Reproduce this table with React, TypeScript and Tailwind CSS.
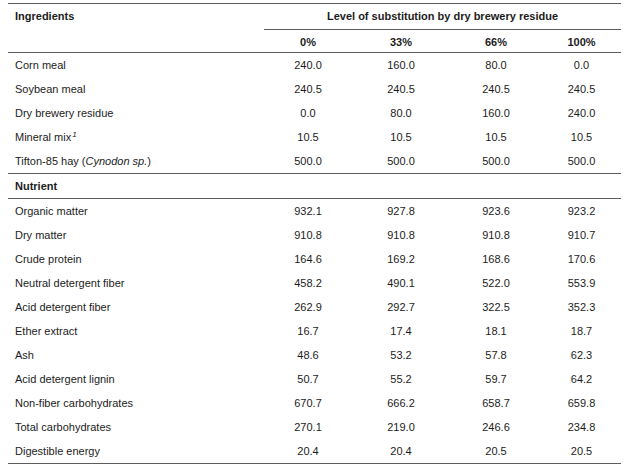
import React from "react";

const ingredients: [React.ReactNode, string[]][] = [
  ["Corn meal", ["240.0", "160.0", "80.0", "0.0"]],
  ["Soybean meal", ["240.5", "240.5", "240.5", "240.5"]],
  ["Dry brewery residue", ["0.0", "80.0", "160.0", "240.0"]],
  [
    <>
      Mineral mix<sup className="italic text-[8px] ml-[1px]">1</sup>
    </>,
    ["10.5", "10.5", "10.5", "10.5"],
  ],
  [
    <>
      Tifton-85 hay (<i>Cynodon sp.</i>)
    </>,
    ["500.0", "500.0", "500.0", "500.0"],
  ],
];

const nutrients: [string, string[]][] = [
  ["Organic matter", ["932.1", "927.8", "923.6", "923.2"]],
  ["Dry matter", ["910.8", "910.8", "910.8", "910.7"]],
  ["Crude protein", ["164.6", "169.2", "168.6", "170.6"]],
  ["Neutral detergent fiber", ["458.2", "490.1", "522.0", "553.9"]],
  ["Acid detergent fiber", ["262.9", "292.7", "322.5", "352.3"]],
  ["Ether extract", ["16.7", "17.4", "18.1", "18.7"]],
  ["Ash", ["48.6", "53.2", "57.8", "62.3"]],
  ["Acid detergent lignin", ["50.7", "55.2", "59.7", "64.2"]],
  ["Non-fiber carbohydrates", ["670.7", "666.2", "658.7", "659.8"]],
  ["Total carbohydrates", ["270.1", "219.0", "246.6", "234.8"]],
  ["Digestible energy", ["20.4", "20.4", "20.5", "20.5"]],
];

const cols = "grid grid-cols-[256px_88px_98px_92px_79px]";

const Row = ({ label, values }: { label: React.ReactNode; values: string[] }) => (
  <div className={`${cols} h-[24px] items-center`}>
    <div className="pl-[7px]">{label}</div>
    {values.map((v, i) => (
      <div key={i} className="text-center">
        {v}
      </div>
    ))}
  </div>
);

const Line = () => <div className="h-[1px] bg-[#5c5c5c]" />;

export default function App() {
  return (
    <div
      className="bg-white w-[628px] h-[465px] pt-[3px] pl-[8px] text-[11px] text-[#1c1c1c]"
      style={{ fontFamily: '"Liberation Sans", Arial, sans-serif' }}
    >
      <div className="w-[613px]">
        <Line />
        <div className={`${cols} h-[25px] items-center font-bold`}>
          <div className="pl-[7px] -mt-[1px]">Ingredients</div>
          <div className="col-span-4 text-center -mt-[1px]">
            Level of substitution by dry brewery residue
          </div>
        </div>
        <div className="ml-[256px] h-[1px] bg-[#5c5c5c]" />
        <div className={`${cols} h-[22px] items-center font-bold`}>
          <div />
          <div className="text-center pt-[3px]">0%</div>
          <div className="text-center pt-[3px]">33%</div>
          <div className="text-center pt-[3px]">66%</div>
          <div className="text-center pt-[3px]">100%</div>
        </div>
        <Line />
        {ingredients.map(([label, values], i) => (
          <Row key={i} label={label} values={values} />
        ))}
        <Line />
        <div className="h-[24px] flex items-center pl-[7px] font-bold">Nutrient</div>
        <Line />
        {nutrients.map(([label, values], i) => (
          <Row key={i} label={label} values={values} />
        ))}
        <Line />
      </div>
    </div>
  );
}
